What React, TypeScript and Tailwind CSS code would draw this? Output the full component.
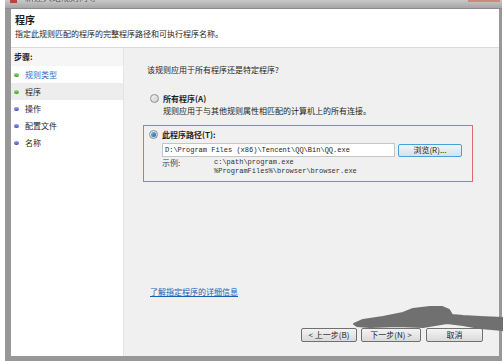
import React from "react";

const steps = [
  { label: "规则类型", done: true, link: true },
  { label: "程序", done: true, active: true },
  { label: "操作" },
  { label: "配置文件" },
  { label: "名称" },
];

function Radio({ checked }: { checked?: boolean }) {
  return (
    <span className="w-[9px] h-[9px] rounded-full border border-[#8e8f8f] bg-gradient-to-br from-[#f4f4f4] to-[#cfcfcf] flex items-center justify-center shrink-0">
      {checked ? <span className="w-[5px] h-[5px] rounded-full bg-gradient-to-br from-[#6fc3f5] to-[#1b5fa8]" /> : null}
    </span>
  );
}

function WizButton({ children, w }: { children: React.ReactNode; w: string }) {
  return (
    <div className={`${w} h-[14px] rounded-[2px] border border-[#707070] bg-gradient-to-b from-[#f3f3f3] to-[#dadada] flex items-center justify-center text-[8px] text-[#1e1e1e] leading-none`}>
      {children}
    </div>
  );
}

export default function App() {
  return (
    <div className="w-[503px] h-[361px] bg-white relative overflow-hidden font-['Noto_Sans_CJK_SC',sans-serif] text-[#1e1e1e]">
      <div className="ml-[5px] w-[497px] h-full flex flex-col">
        {/* title bar, cut off at top of the shot */}
        <div className="h-[9px] bg-gradient-to-b from-[#c9c9c9] to-[#a6a6a6] border-b border-[#8c8c8c] flex items-start overflow-hidden relative">
          <span className="ml-[5px] w-[7px] h-[3px] bg-[#b5483c]" />
          <span className="ml-[8px] -mt-[7px] text-[9px] leading-[10px] text-[#666] blur-[0.5px]">新建入站规则向导</span>
          <span className="absolute right-[2px] top-0 w-[32px] h-[2px] bg-[#c98a80]" />
        </div>

        <div className="flex-1 flex flex-col border-l-[6px] border-r-[3px] border-b-[5px] border-[#989898]">
          {/* header */}
          <div className="h-[39px] bg-white border-b border-[#dadada] px-[4px] pt-[4px]">
            <div className="text-[10px] leading-[13px] font-bold">程序</div>
            <div className="mt-[2px] text-[8px] leading-[11px]">指定此规则匹配的程序的完整程序路径和可执行程序名称。</div>
          </div>

          <div className="flex-1 flex">
            {/* steps */}
            <div className="w-[113px] bg-white border-r border-[#e4e4e4]">
              <div className="h-[18px] bg-[#f6f6f6] flex items-center pl-[3px] text-[8px] font-bold">步骤:</div>
              {steps.map((s) => (
                <div
                  key={s.label}
                  className={`h-[17px] flex items-center pl-[3px] gap-[6px] text-[8px] ${s.active ? "bg-[#ededed]" : ""}`}
                >
                  <span
                    className={`w-[5px] h-[4px] rounded-full ${s.done ? "bg-gradient-to-b from-[#9be37f] to-[#3c9a2a]" : "bg-gradient-to-b from-[#9aa3ec] to-[#4a4fb5]"}`}
                  />
                  <span className={s.link ? "text-[#2a6fc9]" : ""}>{s.label}</span>
                </div>
              ))}
            </div>

            {/* content */}
            <div className="flex-1 bg-[#f0f0f0] flex flex-col">
              <div className="mt-[16px] ml-[23px] text-[8px] leading-[11px]">该规则应用于所有程序还是特定程序?</div>

              <div className="mt-[18px] ml-[26px]">
                <div className="h-[11px] flex items-center gap-[4px]">
                  <Radio />
                  <span className="text-[8px] font-bold">所有程序(A)</span>
                </div>
                <div className="ml-[13px] text-[8px] leading-[11px] mt-[1px]">规则应用于与其他规则属性相匹配的计算机上的所有连接。</div>
              </div>

              <div className="mt-[9px] ml-[19px] w-[330px] h-[57px] border border-[#e06a6a] pl-[5px] pt-[3px]">
                <div className="h-[11px] flex items-center gap-[4px]">
                  <Radio checked />
                  <span className="text-[8px] font-bold">此程序路径(T):</span>
                </div>
                <div className="mt-[3px] ml-[13px] flex items-center gap-[3px]">
                  <div className="w-[233px] h-[14px] bg-white border border-[#c5c5c5] flex items-center pl-[2px] font-['Liberation_Mono',monospace] text-[7px] leading-none whitespace-nowrap">
                    D:\Program Files (x86)\Tencent\QQ\Bin\QQ.exe
                  </div>
                  <div className="w-[64px] h-[13px] rounded-[2px] border border-[#4a9fd4] bg-gradient-to-b from-[#eef6fb] to-[#cfe3ef] flex items-center justify-center text-[8px] leading-none">
                    浏览(R)...
                  </div>
                </div>
                <div className="mt-[1px] ml-[13px] flex">
                  <span className="w-[52px] text-[8px] leading-[9px] text-[#444]">示例:</span>
                  <div className="font-['Liberation_Mono',monospace] text-[7px] leading-[9px] text-[#333]">
                    <div>c:\path\program.exe</div>
                    <div>%ProgramFiles%\browser\browser.exe</div>
                  </div>
                </div>
              </div>

              <div className="mt-[104px] ml-[26px] text-[8px] leading-[11px] text-[#1a5fb4] underline">了解指定程序的详细信息</div>

              <div className="mt-[31px] flex justify-end pr-[16px]">
                <WizButton w="w-[56px]">&lt; 上一步(B)</WizButton>
                <div className="w-[4px]" />
                <WizButton w="w-[60px]">下一步(N) &gt;</WizButton>
                <div className="w-[5px]" />
                <WizButton w="w-[57px]">取消</WizButton>
              </div>
            </div>
          </div>
        </div>
      </div>

      {/* scribble over the buttons */}
      <svg className="absolute left-[350px] top-[298px]" width="153" height="36" viewBox="0 0 153 36">
        <path
          d="M4 26 L13 22 L33 19 L53 15 L63 11 L80 9 L92 9 L99 12 L102 17 L113 18 L130 19 L153 20 L153 32 L130 30 L113 27 L97 25 L85 27 L73 29 L47 28 L20 29 L7 28 Z"
          fill="#707070"
          stroke="#707070"
          strokeWidth="2"
          strokeLinejoin="round"
        />
      </svg>
    </div>
  );
}
